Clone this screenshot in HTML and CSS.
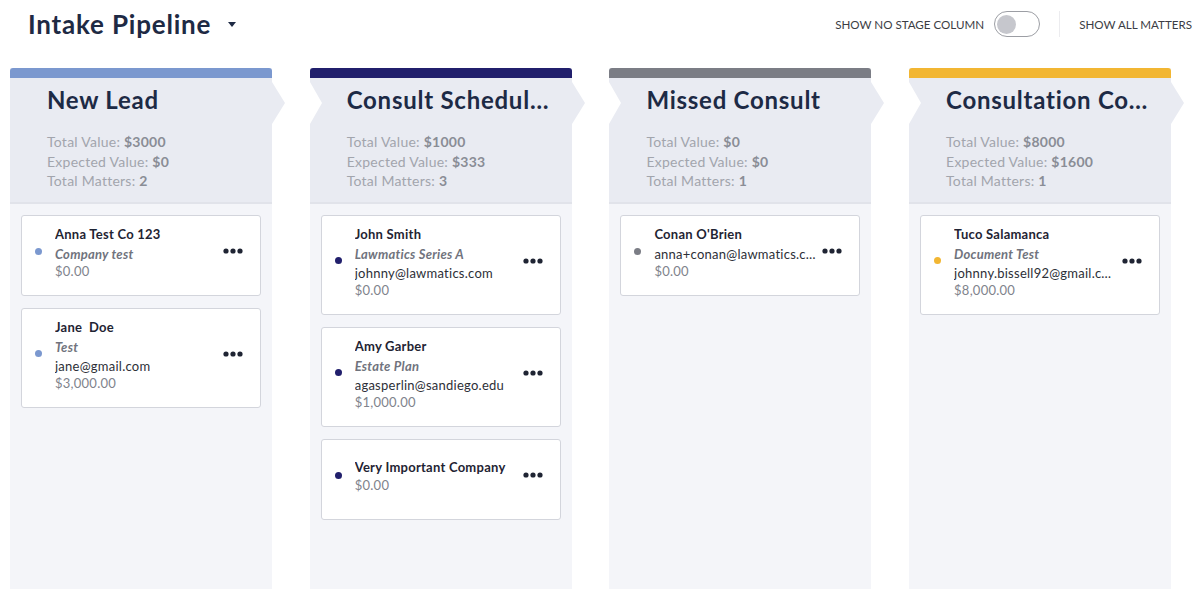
FILE: index.html
```html
<!DOCTYPE html>
<html lang="en">
<head>
<meta charset="utf-8">
<title>Intake Pipeline</title>
<link rel="stylesheet" href="styles.css">
</head>
<body>
<header class="topbar">
  <div class="title-wrap">
    <h1 class="page-title">Intake Pipeline</h1>
    <span class="caret"></span>
  </div>
  <div class="controls">
    <span class="ctrl-label">Show No Stage Column</span>
    <span class="toggle"><span class="knob"></span></span>
    <span class="divider"></span>
    <span class="ctrl-label">Show All Matters</span>
  </div>
</header>

<main class="board">
  <section class="column c-blue first">
    <div class="col-bar"></div>
    <div class="col-head">
      <h2 class="col-title">New Lead</h2>
      <div class="stat">Total Value: <b>$3000</b></div>
      <div class="stat">Expected Value: <b>$0</b></div>
      <div class="stat">Total Matters: <b>2</b></div>
    </div>
    <div class="col-body">
      <div class="card">
        <span class="dot"></span>
        <div class="info">
          <div class="name">Anna Test Co 123</div>
          <div class="sub">Company test</div>
          <div class="amt">$0.00</div>
        </div>
        <svg class="more" width="20" height="6" viewBox="0 0 20 6"><circle cx="3" cy="3" r="2.6"/><circle cx="10" cy="3" r="2.6"/><circle cx="17" cy="3" r="2.6"/></svg>
      </div>
      <div class="card">
        <span class="dot"></span>
        <div class="info">
          <div class="name">Jane&nbsp; Doe</div>
          <div class="sub">Test</div>
          <div class="mail">jane@gmail.com</div>
          <div class="amt">$3,000.00</div>
        </div>
        <svg class="more" width="20" height="6" viewBox="0 0 20 6"><circle cx="3" cy="3" r="2.6"/><circle cx="10" cy="3" r="2.6"/><circle cx="17" cy="3" r="2.6"/></svg>
      </div>
    </div>
  </section>

  <section class="column c-navy">
    <div class="col-bar"></div>
    <div class="col-head">
      <h2 class="col-title">Consult Scheduled</h2>
      <div class="stat">Total Value: <b>$1000</b></div>
      <div class="stat">Expected Value: <b>$333</b></div>
      <div class="stat">Total Matters: <b>3</b></div>
    </div>
    <div class="col-body">
      <div class="card">
        <span class="dot"></span>
        <div class="info">
          <div class="name">John Smith</div>
          <div class="sub">Lawmatics Series A</div>
          <div class="mail">johnny@lawmatics.com</div>
          <div class="amt">$0.00</div>
        </div>
        <svg class="more" width="20" height="6" viewBox="0 0 20 6"><circle cx="3" cy="3" r="2.6"/><circle cx="10" cy="3" r="2.6"/><circle cx="17" cy="3" r="2.6"/></svg>
      </div>
      <div class="card">
        <span class="dot"></span>
        <div class="info">
          <div class="name">Amy Garber</div>
          <div class="sub">Estate Plan</div>
          <div class="mail">agasperlin@sandiego.edu</div>
          <div class="amt">$1,000.00</div>
        </div>
        <svg class="more" width="20" height="6" viewBox="0 0 20 6"><circle cx="3" cy="3" r="2.6"/><circle cx="10" cy="3" r="2.6"/><circle cx="17" cy="3" r="2.6"/></svg>
      </div>
      <div class="card">
        <span class="dot"></span>
        <div class="info">
          <div class="name">Very Important Company</div>
          <div class="amt">$0.00</div>
        </div>
        <svg class="more" width="20" height="6" viewBox="0 0 20 6"><circle cx="3" cy="3" r="2.6"/><circle cx="10" cy="3" r="2.6"/><circle cx="17" cy="3" r="2.6"/></svg>
      </div>
    </div>
  </section>

  <section class="column c-gray">
    <div class="col-bar"></div>
    <div class="col-head">
      <h2 class="col-title">Missed Consult</h2>
      <div class="stat">Total Value: <b>$0</b></div>
      <div class="stat">Expected Value: <b>$0</b></div>
      <div class="stat">Total Matters: <b>1</b></div>
    </div>
    <div class="col-body">
      <div class="card">
        <span class="dot"></span>
        <div class="info">
          <div class="name">Conan O'Brien</div>
          <div class="mail">anna+conan@lawmatics.com</div>
          <div class="amt">$0.00</div>
        </div>
        <svg class="more" width="20" height="6" viewBox="0 0 20 6"><circle cx="3" cy="3" r="2.6"/><circle cx="10" cy="3" r="2.6"/><circle cx="17" cy="3" r="2.6"/></svg>
      </div>
    </div>
  </section>

  <section class="column c-yellow">
    <div class="col-bar"></div>
    <div class="col-head">
      <h2 class="col-title">Consultation Completed</h2>
      <div class="stat">Total Value: <b>$8000</b></div>
      <div class="stat">Expected Value: <b>$1600</b></div>
      <div class="stat">Total Matters: <b>1</b></div>
    </div>
    <div class="col-body">
      <div class="card">
        <span class="dot"></span>
        <div class="info">
          <div class="name">Tuco Salamanca</div>
          <div class="sub">Document Test</div>
          <div class="mail">johnny.bissell92@gmail.com</div>
          <div class="amt">$8,000.00</div>
        </div>
        <svg class="more" width="20" height="6" viewBox="0 0 20 6"><circle cx="3" cy="3" r="2.6"/><circle cx="10" cy="3" r="2.6"/><circle cx="17" cy="3" r="2.6"/></svg>
      </div>
    </div>
  </section>
</main>
</body>
</html>
```

FILE: styles.css
```css
* { box-sizing: border-box; }

html, body {
  margin: 0;
  padding: 0;
  background: #ffffff;
  height: 100%;
  overflow: hidden;
}

body {
  font-family: Lato, "Noto Sans", "Liberation Sans", sans-serif;
  color: #1f2433;
  display: flex;
  flex-direction: column;
}

.topbar {
  height: 48px;
  display: flex;
  align-items: center;
  justify-content: space-between;
  padding: 0 8px 0 28px;
  flex: none;
}

.title-wrap {
  display: flex;
  align-items: center;
  gap: 17px;
}

.page-title {
  margin: 0;
  font-size: 26px;
  font-weight: 700;
  color: #1e2a44;
  letter-spacing: 0.8px;
}

.caret {
  width: 0;
  height: 0;
  border-left: 4.5px solid transparent;
  border-right: 4.5px solid transparent;
  border-top: 5px solid #1e2a44;
  margin-top: 1px;
}

.controls {
  display: flex;
  align-items: center;
}

.ctrl-label {
  font-size: 11.6px;
  text-transform: uppercase;
  color: #3b3d44;
  letter-spacing: 0;
}

.toggle {
  width: 46px;
  height: 26px;
  border: 1.5px solid #9c9ea4;
  border-radius: 13px;
  margin-left: 10px;
  display: flex;
  align-items: center;
  padding-left: 2px;
}

.knob {
  width: 19px;
  height: 19px;
  border-radius: 50%;
  background: #c6c7cd;
}

.divider {
  width: 1px;
  height: 26px;
  background: #ececef;
  margin: 0 19px 0 19px;
}

.board {
  flex: 1;
  display: grid;
  grid-template-columns: repeat(4, 262px);
  column-gap: 37.7px;
  padding: 20px 0 0 10px;
  min-height: 0;
}

.column {
  display: flex;
  flex-direction: column;
  background: #f4f5f9;
  min-width: 0;
}

.col-bar {
  height: 10px;
  border-radius: 3px 3px 0 0;
  flex: none;
}

.c-blue .col-bar, .c-blue .dot { background: #7b98cf; }
.c-navy .col-bar, .c-navy .dot { background: #211f6c; }
.c-gray .col-bar, .c-gray .dot { background: #7b7d85; }
.c-yellow .col-bar, .c-yellow .dot { background: #f2b632; }

.col-head {
  position: relative;
  background: #e9ebf2;
  padding: 7px 17px 11px 37px;
  border-bottom: 2px solid #e1e3ea;
}

/* arrow point on the right of each stage header */
.col-head::after {
  content: "";
  position: absolute;
  top: 4px;
  right: -13px;
  width: 0;
  height: 0;
  border-top: 21px solid transparent;
  border-bottom: 21px solid transparent;
  border-left: 13px solid #e9ebf2;
}

/* notch on the left of following stage headers */
.col-head::before {
  content: "";
  position: absolute;
  top: 4px;
  left: 0;
  width: 0;
  height: 0;
  border-top: 21px solid transparent;
  border-bottom: 21px solid transparent;
  border-left: 12px solid #ffffff;
}

.first .col-head::before { display: none; }

.col-title {
  margin: 0 0 17px 0;
  font-size: 24px;
  line-height: 30px;
  font-weight: 700;
  color: #1d2a45;
  white-space: nowrap;
  overflow: hidden;
  text-overflow: ellipsis;
  letter-spacing: 0.75px;
}

.stat {
  font-size: 14px;
  line-height: 19.5px;
  color: #a2a5ad;
  letter-spacing: 0.25px;
}

.stat b {
  color: #8a8d96;
  font-weight: 700;
}

.col-body {
  padding: 11px 11px 12px;
  display: flex;
  flex-direction: column;
  gap: 12px;
}

.card {
  background: #ffffff;
  border: 1px solid #d3d5dc;
  border-radius: 3px;
  min-height: 81px;
  padding: 8px 17px 16px 13px;
  display: flex;
  align-items: center;
}

.dot {
  width: 7px;
  height: 7px;
  border-radius: 50%;
  flex: none;
  margin-right: 13px;
}

.info {
  flex: 1;
  min-width: 0;
  font-size: 13px;
  letter-spacing: 0.25px;
}

.info > div {
  white-space: nowrap;
  overflow: hidden;
  text-overflow: ellipsis;
}

.name {
  font-weight: 700;
  line-height: 21px;
  color: #1f2433;
}

.sub {
  font-style: italic;
  font-weight: 700;
  line-height: 19px;
  color: #70737d;
}

.mail {
  line-height: 19px;
  color: #2d2f37;
}

.amt {
  line-height: 15px;
  color: #80838c;
}

.more {
  flex: none;
  margin-left: 6px;
  fill: #1f2433;
}
```
